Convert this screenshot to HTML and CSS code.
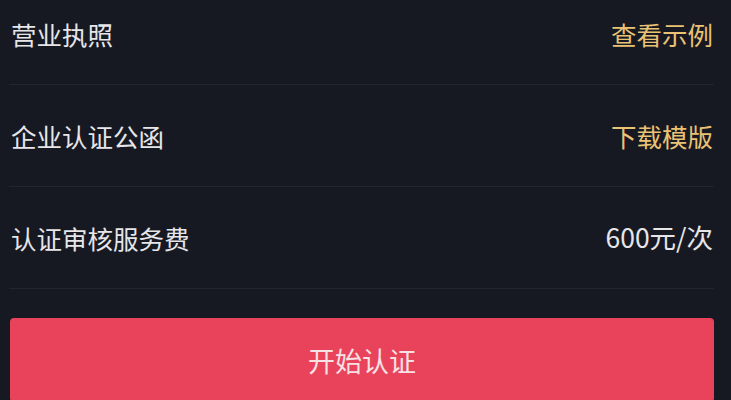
FILE: index.html
```html
<!DOCTYPE html>
<html lang="zh-CN">
<head>
<meta charset="utf-8">
<link rel="stylesheet" href="styles.css">
</head>
<body>
<div class="page">
  <div class="list">
    <div class="row">
      <span class="label">营业执照</span>
      <span class="link">查看示例</span>
    </div>
    <div class="row">
      <span class="label">企业认证公函</span>
      <span class="link">下载模版</span>
    </div>
    <div class="row">
      <span class="label">认证审核服务费</span>
      <span class="value">600元/次</span>
    </div>
  </div>
  <button class="cta">开始认证</button>
</div>
</body>
</html>
```
FILE: styles.css
```css
html, body {
  margin: 0;
  padding: 0;
  background: #171922;
  overflow: hidden;
}
body {
  font-family: "Noto Sans CJK SC", "Noto Sans", sans-serif;
}
.page {
  width: 705px;
  padding-left: 9px;
  display: flex;
  flex-direction: column;
}
.list {
  margin-top: -17px;
  display: flex;
  flex-direction: column;
}
.row {
  height: 101px;
  border-bottom: 1px solid #23252e;
  display: flex;
  align-items: center;
  justify-content: space-between;
  padding: 0 1px 0 2px;
  font-size: 25.5px;
  line-height: 1;
}
.label {
  color: #e6e6e9;
}
.link {
  color: #eac274;
}
.value {
  color: #e6e6e9;
  font-size: 26.5px;
}
.cta {
  margin-top: 29px;
  margin-left: 1px;
  height: 84px;
  border: none;
  border-radius: 4px;
  background: #e8435a;
  color: #f7e1e4;
  font-family: "Noto Sans CJK SC", "Noto Sans", sans-serif;
  font-size: 27px;
  padding: 0;
}
```
